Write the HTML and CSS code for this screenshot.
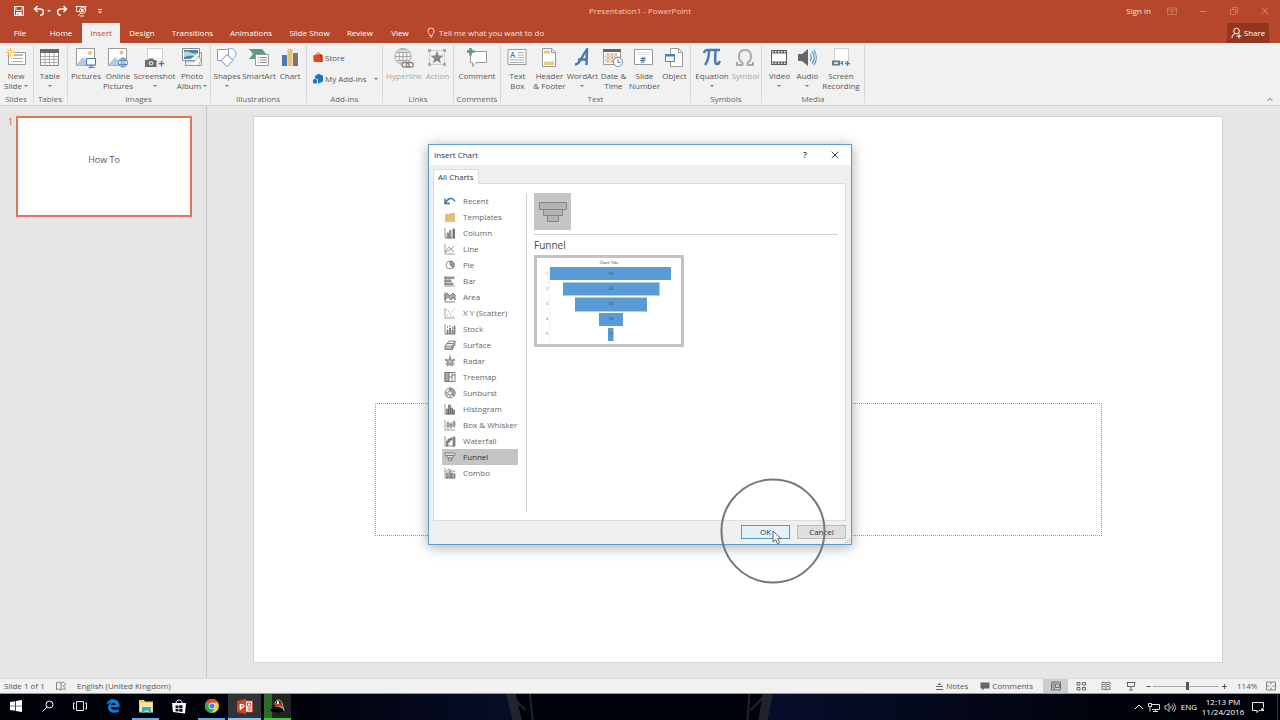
FILE: index.html
```html
<!DOCTYPE html>
<html lang="en">
<head>
<meta charset="utf-8">
<title>Presentation1 - PowerPoint</title>
<link rel="stylesheet" href="styles.css">
</head>
<body>
<div class="app">
<header class="titlebar">
  <div class="quick">
    <button class="qbtn q-save" aria-label="Save"><svg viewBox="0 0 12 12" width="12" height="12" fill="none" stroke="#fff"><path d="M1.5 1.5h9v9h-9z"/><path d="M3 1.5h6v4H3z" fill="#b7472a" stroke-width=".8"/><path d="M3.5 7.5h5v3h-5z" fill="#fff"/><path d="M5 8.5v2" stroke="#b7472a"/></svg></button>
    <button class="qbtn q-undo" aria-label="Undo"><svg viewBox="0 0 12 12" width="12" height="12" fill="none" stroke="#fff" stroke-width="1.4"><path d="M4.5 1 1.5 4l3 3M2 4h5c4.500 0 4.500 6 0 6.500"/></svg></button>
    <span class="caret caret-light"></span>
    <button class="qbtn q-redo" aria-label="Redo"><svg viewBox="0 0 12 12" width="12" height="12" fill="none" stroke="#fff" stroke-width="1.400"><path d="M7.500 1l3 3-3 3M10 4H5C.5 4 .5 10 5 10.500"/></svg></button>
    <button class="qbtn q-show" aria-label="Start from beginning"><svg viewBox="0 0 12 12" width="12" height="12" fill="none" stroke="#fff" stroke-width=".9"><path d="M.5 1.500h11M1.500 1.500v5H5M3 11l3-3M5 11h4"/><circle cx="7.500" cy="5.500" r="3"/><path d="M6.500 4v3l2.500-1.500z" fill="#fff"/><path d="M10.500 2v4"/></svg></button>
    <button class="qbtn q-more" aria-label="Customize toolbar"><svg viewBox="0 0 12 12" width="12" height="12"><path d="M4 4h4v1H4zM4 6.500h4L6 8.500z" fill="#fff"/></svg></button>
  </div>
  <div class="doc-title">Presentation1 - PowerPoint</div>
  <div class="window-tools">
    <a class="signin" href="#">Sign in</a>
    <button class="wbtn" aria-label="Ribbon display"><svg viewBox="0 0 10 10" width="10" height="10" fill="none" stroke="#d4836c" stroke-width=".8"><path d="M.5 2h9v6.500h-9zM.5 4h9M5 8V5M3.800 6 5 4.900 6.200 6"/></svg></button>
    <button class="wbtn" aria-label="Minimize"><svg viewBox="0 0 10 10" width="10" height="10" stroke="#d4836c"><path d="M1.500 5.500h7"/></svg></button>
    <button class="wbtn" aria-label="Restore"><svg viewBox="0 0 10 10" width="10" height="10" fill="none" stroke="#d4836c" stroke-width=".8"><path d="M1.500 3.500h5v5h-5zM3.500 3.500v-2h5v5h-2"/></svg></button>
    <button class="wbtn" aria-label="Close"><svg viewBox="0 0 10 10" width="10" height="10" stroke="#d4836c"><path d="M1.500 1.500l7 7M8.500 1.500l-7 7"/></svg></button>
  </div>
</header>
<nav class="tabs">
  <button class="tab t-file">File</button><button class="tab t-home">Home</button><button class="tab t-insert active">Insert</button><button class="tab t-design">Design</button><button class="tab t-trans">Transitions</button><button class="tab t-anim">Animations</button><button class="tab t-trans">Slide Show</button><button class="tab t-design">Review</button><button class="tab t-view">View</button>
  <button class="tellme"><svg viewBox="0 0 8 12" width="8" height="12" fill="none" stroke="#fbe3dc" stroke-width=".9"><path d="M2.700 8.500C2.700 7 1 6 1 4a3 3 0 0 1 6 0c0 2-1.700 3-1.700 4.500zM2.700 10h2.600"/></svg>Tell me what you want to do</button>
  <button class="share"><svg viewBox="0 0 11 12" width="11" height="12" fill="none" stroke="#fff"><circle cx="5.500" cy="4" r="2.800"/><path d="M1 11c0-2.500 1.500-4 3.500-4.500M8 6.500v5M5.500 9h5"/></svg>Share</button>
</nav>
<section class="ribbon">
  <div class="group"><div class="tools">
    <button class="tool w30"><svg viewBox="0 0 20 20" width="20" height="20" fill="none"><path d="M2.500 4.500h17v12h-17z" fill="#fff" stroke="#9a9a9a"/><path d="M8 7h9" stroke="#bbb" stroke-width="2"/><path d="M5 10.500h1M7 10.500h10M5 13.500h1M7 13.500h10" stroke="#aaa"/><path d="M4.500 0v9M0 4.500h9M1.300 1.300l6.400 6.400M7.700 1.300 1.300 7.700" stroke="#e9b963"/><circle cx="4.500" cy="4.500" r="1.800" fill="#f7e3b5"/></svg><span>New<br>Slide<i class="caret"></i></span></button>
  </div><div class="gname">Slides</div></div>
  <div class="group"><div class="tools">
    <button class="tool w30"><svg viewBox="0 0 20 20" width="20" height="20" fill="none"><path d="M.5 1.500h18v16H.5z" fill="#fff" stroke="#888"/><path d="M0 1h19v4H0z" fill="#6a6a6a"/><path d="M5 5v13M9.500 5v13M14 5v13M0 8.500h19M0 11.500h19M0 14.500h19" stroke="#999" stroke-width=".8"/></svg><span>Table</span><i class="caret"></i></button>
  </div><div class="gname">Tables</div></div>
  <div class="group"><div class="tools">
    <button class="tool w34"><svg viewBox="0 0 20 20" width="20" height="20" fill="none"><path d="M.5.5h18v17H.5z" fill="#fff" stroke="#999"/><path d="M1 16l6-7 5 5v3.500H1z" fill="#b6cbdf"/><circle cx="14" cy="5" r="2" fill="#ecc06c"/><path d="M10.500 10.500h9v6.500h-9z" fill="#fff" stroke="#4377aa"/><path d="M15 17v2M12.500 19.500h6" stroke="#4377aa"/></svg><span>Pictures</span></button>
    <button class="tool w30"><svg viewBox="0 0 20 20" width="20" height="20" fill="none"><path d="M.5.5h18v17H.5z" fill="#fff" stroke="#999"/><path d="M1 16l6-7 5 5v3.500H1z" fill="#b6cbdf"/><circle cx="13.500" cy="4.500" r="2" fill="#ecc06c"/><g fill="#fff" stroke="#4f80b0" stroke-width=".9"><circle cx="15" cy="14.500" r="4.500"/><ellipse cx="15" cy="14.500" rx="2" ry="4.500"/><path d="M11 12.500h8M11 16.500h8M15 10v9"/></g></svg><span>Online<br>Pictures</span></button>
    <button class="tool w42"><svg viewBox="0 0 20 20" width="20" height="20" fill="none"><path d="M2.500.5h15v13h-15z" fill="#fff" stroke="#aaa" stroke-dasharray="1 1"/><path d="M0 12h3l1-1.500h4L9 12h2.500v7H0z" fill="#6b6b6b"/><circle cx="6" cy="15.300" r="2.300" fill="#ddd"/><circle cx="6" cy="15.300" r="1.100" fill="#6b6b6b"/><path d="M16.500 13v5.500M13.700 15.700h5.600" stroke="#3f72a6" stroke-width="1.300"/></svg><span>Screenshot</span><i class="caret"></i></button>
    <button class="tool w32"><svg viewBox="0 0 20 20" width="20" height="20" fill="none"><path d="M3.500 4.500h16v13h-16z" fill="#eee" stroke="#999"/><path d="M.5.5h17v12H.5z" fill="#fff" stroke="#888"/><path d="M2 2h14v9H2z" fill="#4c81ad"/><path d="M2 4c5-2 8 3 14 1v3c-6 0-8-1-14 1z" fill="#b9d8d0"/><path d="M8 11l8-5v5z" fill="#fff"/><path d="M3 14h9l4-6 3 4-3 5" fill="#fff" stroke="#999" stroke-width=".7"/></svg><span>Photo<br>Album<i class="caret"></i></span></button>
  </div><div class="gname">Images</div></div>
  <div class="group"><div class="tools">
    <button class="tool w30"><svg viewBox="0 0 20 20" width="20" height="20" fill="#fff" stroke="#7d9fc1"><circle cx="13.500" cy="6" r="5.500"/><path d="M.5 1.500h11v11H.5z"/><path d="M10 6.500l6 6-6 6-6-6z" stroke="#5f8ebb"/></svg><span>Shapes</span><i class="caret"></i></button>
    <button class="tool w34"><svg viewBox="0 0 20 20" width="20" height="20"><path d="M0 1h13l4 5-4 5H0l4-5z" fill="#5b9b81"/><path d="M6.500 6.500h13v11h-13z" fill="#fff" stroke="#999"/><path d="M8.500 9.500h1M11 9.500h7M8.500 12h1M11 12h7M8.500 14.500h1M11 14.500h7" stroke="#888"/></svg><span>SmartArt</span></button>
    <button class="tool w28"><svg viewBox="0 0 20 20" width="20" height="20"><path d="M2 7h5v11H2z" fill="#4b7caf"/><path d="M7.500 1h5v17h-5z" fill="#e9c276"/><path d="M13 5h5v13h-5z" fill="#777"/></svg><span>Chart</span></button>
  </div><div class="gname">Illustrations</div></div>
  <div class="group"><div class="addins">
    <button class="addin"><svg viewBox="0 0 10 11" width="10" height="11"><path d="M0 3.500 7 2l2.500 1v7H1z" fill="#e8471a"/><path d="M3 3c.5-3 3.500-2.500 4-.5" fill="none" stroke="#e8471a"/><path d="M7 2l2.500 1v7L8 9.500z" fill="#c43413"/></svg>Store</button>
    <button class="addin"><svg viewBox="0 0 10 11" width="10" height="11"><path d="M2 3 5.500.8l4.500 2v5.500L6 10.500 5 10V6.500L2 5z" fill="#1e76bd"/><path d="M0 7l2-1.500L4 7v3l-2 .8L0 10z" fill="#1e76bd"/></svg>My Add-ins<i class="caret"></i></button>
  </div><div class="gname">Add-ins</div></div>
  <div class="group"><div class="tools">
    <button class="tool off w38"><svg viewBox="0 0 20 20" width="20" height="20" fill="none" stroke="#a5a5a5"><circle cx="9" cy="8.500" r="8"/><ellipse cx="9" cy="8.500" rx="4" ry="8"/><path d="M9 .5v16M1 8.500h16M2.500 4.500h13M2.500 12.500h13"/><rect x="8" y="14.500" width="7" height="4.500" rx="2.200" fill="#f0f0f0" stroke="#888" stroke-width="1.300"/><rect x="12.300" y="14.500" width="7" height="4.500" rx="2.200" stroke="#888" stroke-width="1.300"/></svg><span>Hyperlink</span></button>
    <button class="tool off w28"><svg viewBox="0 0 20 20" width="20" height="20"><path d="M2.500 2.500h15v14h-15z" fill="none" stroke="#aaa" stroke-dasharray="1 1"/><path d="M1 1h3v3H1zM16 1h3v3h-3zM1 15h3v3H1zM16 15h3v3h-3z" fill="#aaa"/><path d="M10 3l1.800 4.500 4.700.2-3.700 3 1.300 4.800-4.100-2.700-4.100 2.700 1.300-4.800-3.700-3 4.700-.2z" fill="#888"/></svg><span>Action</span></button>
  </div><div class="gname">Links</div></div>
  <div class="group"><div class="tools">
    <button class="tool w42"><svg viewBox="0 0 20 20" width="20" height="20"><path d="M3.500 3.500h16v11H9l-3.500 4v-4h-2z" fill="#fff" stroke="#999"/><path d="M3.500 0v7.500M0 3.500h7.500" stroke="#5b9b81" stroke-width="2.600"/></svg><span>Comment</span></button>
  </div><div class="gname">Comments</div></div>
  <div class="group"><div class="tools">
    <button class="tool w30"><svg viewBox="0 0 20 20" width="20" height="20"><path d="M1 1.500h18v15H1z" fill="#fff" stroke="#999"/><text x="3" y="10" class="svg-a">A</text><path d="M11 4.500h6M11 7h6M11 9.500h6M3 12h14M3 14.500h14" stroke="#aaa"/></svg><span>Text<br>Box</span></button>
    <button class="tool w34"><svg viewBox="0 0 20 20" width="20" height="20"><path d="M3.500.5h9l4 4v14h-13z" fill="#fff" stroke="#999"/><path d="M12.500.5v4h4" fill="none" stroke="#999"/><path d="M5 2.500h6v3H5zM5 13.500h10v3.500H5z" fill="#e9c880"/></svg><span>Header<br>&amp; Footer</span></button>
    <button class="tool w32"><svg viewBox="0 0 20 20" width="20" height="20"><path d="M3 16.500c5 0 7-9 12-15L14.500 17M6 11.500h9" fill="none" stroke="#4878ae" stroke-width="2.400"/></svg><span>WordArt</span><i class="caret"></i></button>
    <button class="tool w30"><svg viewBox="0 0 20 20" width="20" height="20" fill="none"><path d="M.5 1.500h17v15H.5z" fill="#fff" stroke="#999"/><path d="M0 1h18v3H0z" fill="#666"/><path d="M4 6.500h2M8 6.500h2M12 6.500h2M4 10h2M8 10h2M12 10h2M4 13.500h2M8 13.500h2" stroke="#dfa768" stroke-width="2"/><path d="M1 8.300h16M1 11.800h16M3 5v11M7 5v11M11 5v11" stroke="#bbb" stroke-width=".7"/><circle cx="15" cy="14" r="4.500" fill="#fff" stroke="#6794bd"/><path d="M15 11v3.500h2.500" stroke="#4a7cac"/></svg><span>Date &amp;<br>Time</span></button>
    <button class="tool w32"><svg viewBox="0 0 20 20" width="20" height="20"><path d="M.5 1.500h18v15H.5z" fill="#fff" stroke="#999"/><path d="M4 4.500h12M4 6.500h12" stroke="#ddd"/><text x="6" y="15" class="svg-hash">#</text></svg><span>Slide<br>Number</span></button>
    <button class="tool w28"><svg viewBox="0 0 20 20" width="20" height="20"><path d="M6.500.5h8l4 4v14h-12z" fill="#fff" stroke="#999"/><path d="M14.500.5v4h4" fill="none" stroke="#999"/><path d="M1.500 6.500h9v7h-9z" fill="#fff" stroke="#4b7eb1"/><path d="M1 6h10v2.500H1z" fill="#4b7eb1"/></svg><span>Object</span></button>
  </div><div class="gname">Text</div></div>
  <div class="group"><div class="tools">
    <button class="tool w38"><svg viewBox="0 0 20 20" width="20" height="20"><path d="M2 5c.5-3 2-3 4-3h12M7 3c0 6-1 10-4 14M13.500 3c-.5 8-1 13 1.500 13 1.500 0 2.500-1 2.500-3" fill="none" stroke="#4a7cb0" stroke-width="2.500"/></svg><span>Equation</span><i class="caret"></i></button>
    <button class="tool off w28"><svg viewBox="0 0 20 20" width="20" height="20"><path d="M2 14v3h5.500v-2C2 11 3 2 10 2s8 9 2.500 13v2H18v-3" fill="none" stroke="#aaa" stroke-width="2"/></svg><span>Symbol</span></button>
  </div><div class="gname">Symbols</div></div>
  <div class="group"><div class="tools">
    <button class="tool w32"><svg viewBox="0 0 20 20" width="20" height="20"><path d="M2 2h16v15H2z" fill="#5d5d5d"/><path d="M3 5.500h14v8H3z" fill="#fff"/><path d="M3 3.700h14M3 15.300h14" stroke="#eee" stroke-width="1.500" stroke-dasharray="1.500 1.500"/></svg><span>Video</span><i class="caret"></i></button>
    <button class="tool w24"><svg viewBox="0 0 20 20" width="20" height="20"><path d="M1 6h4l6-5v17l-6-5H1z" fill="#666"/><path d="M13 6c1.500 2 1.500 5 0 7M15 3.500c3 3.500 3 8.500 0 12M17 2c3 4.500 3 10.500 0 15" fill="none" stroke="#5b8fbd" stroke-width="1.200"/></svg><span>Audio</span><i class="caret"></i></button>
    <button class="tool w42"><svg viewBox="0 0 20 20" width="20" height="20"><path d="M3.500.5h14v13h-14z" fill="#fff" stroke="#aaa" stroke-dasharray="1 1"/><path d="M1 12.500h8v5H1z" fill="#6d7780"/><path d="M3 14h4v2H3z" fill="#cde"/><path d="M9 15l3-2v4.500z" fill="#4b7eb1"/><path d="M16.500 13v5M14 15.500h5" stroke="#4b7eb1" stroke-width="1.300"/></svg><span>Screen<br>Recording</span></button>
  </div><div class="gname">Media</div></div>
  <button class="collapse" aria-label="Collapse ribbon"><svg viewBox="0 0 6 5" width="6" height="5" fill="none" stroke="#666"><path d="M.5 4 3 1.500 5.500 4"/></svg></button>
</section>
<main class="workspace">
  <aside class="slides"><span class="slide-no">1</span><button class="thumb">How To</button></aside>
  <section class="canvas"><div class="slide"><div class="placeholder"></div></div></section>
</main>
<footer class="status">
  <span class="s-slide">Slide 1 of 1</span>
  <button class="icon-btn s-spell" aria-label="Spelling"><svg viewBox="0 0 10 10" width="10" height="10" fill="none" stroke="#777" stroke-width=".9"><path d="M5 2v7M5 2C3.500 1 2 1 .500 1.500V8.500c1.500-.5 3-.5 4.500.5 1-1 2-1 4-.7V6M5 2c1-.8 2-1 3.500-.8M6.500 4l1.200 1.500L9.800 2"/></svg></button>
  <span>English (United Kingdom)</span>
  <div class="status-right">
    <button class="s-btn s-notes"><svg viewBox="0 0 9 9" width="9" height="9" stroke="#666"><path d="M1 4.500h7M1 7.500h7"/><path d="M2.500 3 4.500 1l2 2z" fill="#666" stroke="none"/></svg>Notes</button>
    <button class="s-btn s-comments"><svg viewBox="0 0 10 9" width="10" height="9"><path d="M.5.500h9v6h-5l-2 2v-2h-2z" fill="#666"/></svg>Comments</button>
    <button class="view on" aria-label="Normal"><svg viewBox="0 0 10 10" width="10" height="10" fill="none" stroke="#666" stroke-width=".9"><path d="M.5 1h9v8h-9zM3 1v8M4.500 3h4v3.500h-4zM1 3.500h1M1 6h1"/></svg></button>
    <button class="view" aria-label="Slide sorter"><svg viewBox="0 0 10 10" width="10" height="10" fill="none" stroke="#666"><path d="M1 1.500h3v2.500H1zM6.500 1.500h3v2.500h-3zM1 6.500h3V9H1zM6.500 6.500h3V9h-3z"/></svg></button>
    <button class="view" aria-label="Reading view"><svg viewBox="0 0 10 10" width="10" height="10" fill="none" stroke="#666" stroke-width=".9"><path d="M5 2v7M5 2C3.500 1 2 1 1 1.500v7c1.500-.5 2.500-.5 4 .5 1.500-1 2.500-1 4-.5v-7C8 1 6.500 1 5 2M2 3.500h2M2 5.500h2M6 3.500h2M6 5.500h2"/></svg></button>
    <button class="view" aria-label="Slide show"><svg viewBox="0 0 10 10" width="10" height="10" fill="none" stroke="#666"><path d="M.5 1.500h9M1.500 1.500v4h7v-4M5 5.500v3M3 9h4"/></svg></button>
    <button class="zoom-step" aria-label="Zoom out"><svg viewBox="0 0 7 7" width="7" height="7" stroke="#555"><path d="M1.500 3.500h4"/></svg></button>
    <input class="zoom" type="range" min="0" max="100" value="53" aria-label="Zoom">
    <button class="zoom-step" aria-label="Zoom in"><svg viewBox="0 0 7 7" width="7" height="7" stroke="#555"><path d="M1 3.500h5M3.500 1v5"/></svg></button>
    <span class="percent">114%</span>
    <button class="icon-btn" aria-label="Fit slide"><svg viewBox="0 0 10 10" width="10" height="10" fill="none" stroke="#777" stroke-width=".9"><path d="M.5 1h9v8h-9zM5 1v2.500M5 6.500V9M1 5h2.500M6.500 5H9"/></svg></button>
  </div>
</footer>
<nav class="taskbar">
  <button class="task narrow" aria-label="Start"><svg viewBox="0 0 12 12" width="12" height="12" fill="#fff"><path d="M0 2l5-.8v4.500H0zM5.700 1 12 0v5.700H5.700zM0 6.300h5v4.500L0 10zM5.700 6.300H12V12l-6.300-1z"/></svg></button>
  <button class="task narrow" aria-label="Search"><svg viewBox="0 0 12 12" width="12" height="12" fill="none" stroke="#fff"><circle cx="7.500" cy="4.500" r="3.500"/><path d="M5 7l-4.500 4.500"/></svg></button>
  <button class="task narrow" aria-label="Task view"><svg viewBox="0 0 14 12" width="14" height="12" fill="none" stroke="#fff" stroke-width=".9"><path d="M3.500 1.500h7v9h-7zM2 3H.5v6H2M12 3h1.500v6H12"/></svg></button>
  <button class="task" aria-label="Edge"><svg viewBox="0 0 14 14" width="14" height="14"><path d="M.5 6C1.500-2 13.500-1.500 13.500 6.500V8.300H5c.5 3 5 3.500 7.800 1.700v2.700C8 15 2 13.500 2 8.500 2 6 3.500 4.500 5 3.800 3 4 1.300 5 .5 6zM5 6h4.500C9.500 3 5.300 3 5 6z" fill="#0f7bd7"/></svg></button>
  <button class="task open" aria-label="File Explorer"><svg viewBox="0 0 14 13" width="14" height="13"><path d="M0 0h5l1 1.500h8v11H0z" fill="#f2cf72"/><path d="M1 3h12v8H1z" fill="#fbe7a3"/><path d="M3 7h9v6H9.500v-2.500h-4V13H3z" fill="#3fa9cb"/></svg></button>
  <button class="task" aria-label="Store"><svg viewBox="0 0 14 15" width="14" height="15"><path d="M0 4h14l-1 10.500L1 13z" fill="#fff"/><path d="M4 4c0-4 6-4 6 0" fill="none" stroke="#fff"/><path d="M3.500 6.500h3v2.800h-3zM7.200 6.300h3.300v3H7.200zM3.500 10h3v2.500l-3-.3zM7.200 10h3.300v3l-3.300-.4z" fill="#111"/></svg></button>
  <button class="task open" aria-label="Chrome"><svg viewBox="0 0 14 14" width="14" height="14"><circle cx="7" cy="7" r="7" fill="#f7ca28"/><path d="M7 7 1 3.300A7 7 0 0 1 13 3.500H7z" fill="#df4b37"/><path d="M1 3.300A7 7 0 0 0 6.500 14L9.500 9 7 7z" fill="#35a357"/><circle cx="7" cy="7" r="3.300" fill="#fff"/><circle cx="7" cy="7" r="2.600" fill="#3d82ee"/></svg></button>
  <button class="task open current" aria-label="PowerPoint"><svg viewBox="0 0 16 15" width="16" height="15"><path d="M8 2h7.500v11H8z" fill="#fff" stroke="#d24625" stroke-width=".8"/><path d="M0 2l9-2v15l-9-2z" fill="#d24625"/><text x="2" y="10.500" class="svg-p">P</text><path d="M10.500 4h3v3h-3zM10.500 9h4M10.500 11h4" stroke="#d24625" fill="none"/></svg></button>
  <button class="task recorder" aria-label="Recorder"><svg viewBox="0 0 16 16" width="16" height="16"><path d="M3 14V6l2-4h6l3 8v4z" fill="#151713"/><path d="M4 6h7M5 8h7" stroke="#e3503b" stroke-width="1.500"/><path d="M5 5c1-4 6-4 7 0l2 8M9 8l5 3" fill="none" stroke="#ddc37d"/><path d="M7 3h2v3H7z" fill="#e9e8d2"/><path d="M1 13c3-3 6 2 12-1" stroke="#000" stroke-width="3" fill="none"/></svg></button>
  <svg class="wallpaper" viewBox="0 0 836 26" preserveAspectRatio="none" aria-hidden="true">
    <defs>
      <linearGradient id="glow-left"><stop offset="0" stop-color="#000209"/><stop offset="1" stop-color="#080d28"/></linearGradient>
      <linearGradient id="glow-right"><stop offset="0" stop-color="#080e2b"/><stop offset="1" stop-color="#000209"/></linearGradient>
    </defs>
    <path d="M0 0h216l10 26H0z" fill="url(#glow-left)"/><path d="M478 0h358v26H472z" fill="url(#glow-right)"/>
    <path d="M214 0h10l6 26h-9zM470 0h10l-5 26h-9z" fill="#20252b"/>
    <path d="M220 3l14 13M238 0l3 26M471 3l-13 13M457 0l-2 26" fill="none" stroke="#22252e" stroke-width="2"/>
  </svg>
  <div class="tray">
    <button class="tray-btn" aria-label="Show hidden icons"><svg viewBox="0 0 10 8" width="10" height="8" fill="none" stroke="#fff"><path d="M1 6l4-4 4 4"/></svg></button>
    <button class="tray-btn" aria-label="Network"><svg viewBox="0 0 12 11" width="12" height="11" fill="none" stroke="#ddd"><path d="M4 2.500h7.500v5H4M7.500 7.500v2M5 9.500h5M.5 1.500h3v3h-3zM2 4.500v5"/></svg></button>
    <button class="tray-btn" aria-label="Volume"><svg viewBox="0 0 12 11" width="12" height="11" fill="none" stroke="#ddd" stroke-width=".9"><path d="M1 4h1.500L5 1.500v8L2.500 7H1zM6.500 4c.7 1 .7 2 0 3M8 2.500c1.700 2 1.700 4 0 6M9.700 1.200c2.200 3 2.200 6 0 8.800"/></svg></button>
    <span class="lang">ENG</span>
    <time class="clock">12:13 PM<br>11/24/2016</time>
    <button class="tray-btn notify" aria-label="Notifications"><svg viewBox="0 0 12 12" width="12" height="12" fill="none" stroke="#eee"><path d="M8.500 9.500H7l-2 2v-2H.5v-8h11v5"/><path d="M8.500 10c1-1 .5-3 2-3s1 2 1.500 3z" fill="#eee" stroke="none"/></svg></button>
  </div>
</nav>

<section class="dialog" role="dialog" aria-label="Insert Chart">
  <header class="d-title"><span>Insert Chart</span><button class="d-help" aria-label="Help">?</button><button class="d-close" aria-label="Close"><svg viewBox="0 0 8 8" width="8" height="8" stroke="#333" stroke-width=".9"><path d="M.7.700l6.600 6.600M7.300.700.700 7.300"/></svg></button></header>
  <div class="d-body">
    <button class="d-tab">All Charts</button>
    <div class="d-panel">
      <div class="types">
        <button class="type"><svg viewBox="0 0 12 12" width="12" height="12" fill="none" stroke="#3b6fa5" stroke-width="1.400"><path d="M1 3.500v5h5M1.500 8C4 3 8 1.500 11 6.500"/></svg>Recent</button>
        <button class="type"><svg viewBox="0 0 12 12" width="12" height="12"><path d="M1 3h5l1-1h4v9H1z" fill="#e9bd75"/></svg>Templates</button>
        <button class="type"><svg viewBox="0 0 12 12" width="12" height="12" fill="#bbb" stroke="#666" stroke-width=".7"><path d="M1 1v10h10" fill="none"/><path d="M3 6h1.500v5H3zM5.500 3.500H7V11H5.500z"/><path d="M9 2h1.500v9H9z" fill="#666"/></svg>Column</button>
        <button class="type"><svg viewBox="0 0 12 12" width="12" height="12" fill="none" stroke="#777" stroke-width=".7"><path d="M1 1v10h10M1 9l4-5 5 5M2 9l5-3 3-3"/></svg>Line</button>
        <button class="type"><svg viewBox="0 0 12 12" width="12" height="12" fill="#fff" stroke="#777" stroke-width=".8"><circle cx="6" cy="6" r="4"/><path d="M6 2v4l3 3a4 4 0 0 0-3-7z" fill="#999"/></svg>Pie</button>
        <button class="type"><svg viewBox="0 0 12 12" width="12" height="12" fill="#bbb" stroke="#666" stroke-width=".7"><path d="M1 1v10h10" fill="none"/><path d="M1 2h9v1.500H1zM1 5h6v1.500H1zM1 8h8v1.500H1z"/></svg>Bar</button>
        <button class="type"><svg viewBox="0 0 12 12" width="12" height="12" fill="#aaa" stroke="#666" stroke-width=".8"><path d="M1 1v10h10" fill="none"/><path d="M1 4l2-2 3 3 3-3 2 2v5L9 6 7 9 4 6 1 9z"/></svg>Area</button>
        <button class="type"><svg viewBox="0 0 12 12" width="12" height="12" fill="none" stroke="#888" stroke-width=".8"><path d="M1 1v10h10"/><path d="M3 8h1M5 6h1M4 4h1M7 7h1M8 4h1M10 2h1M9 9h1M6 9h1M2 3h1"/></svg>X Y (Scatter)</button>
        <button class="type"><svg viewBox="0 0 12 12" width="12" height="12" fill="#bbb" stroke="#666" stroke-width=".7"><path d="M1 1v10h10" fill="none"/><path d="M3 7h1v4H3zM5.500 5h1v6h-1zM8 7h1v4H8zM10 3h1v8h-1zM3.500 3v2M6 2v2M8.500 4v2"/></svg>Stock</button>
        <button class="type"><svg viewBox="0 0 12 12" width="12" height="12" fill="#eee" stroke="#666" stroke-width=".8"><path d="M1 10.500V7l4-5h6v3l-3 5.500zM1 7h7l3-5M1 9h7l3-4M8 7v3.500M3 4.500h6"/></svg>Surface</button>
        <button class="type"><svg viewBox="0 0 12 12" width="12" height="12" fill="#ddd" stroke="#777" stroke-width=".8"><path d="M6 0v11M1 4l10 5M11 4L1 9" fill="none"/><path d="M6 2l1 3 4 0-3 2 1 4-3-2-3 2 1-4-3-2 4 0z" fill="#bbb"/></svg>Radar</button>
        <button class="type"><svg viewBox="0 0 12 12" width="12" height="12" fill="#fff" stroke="#666" stroke-width=".8"><path d="M1 1.500h10v9H1z"/><path d="M1 1.500h4v9H1z" fill="#aaa"/><path d="M8 1.500v9M5 6h3M8 4h3"/></svg>Treemap</button>
        <button class="type"><svg viewBox="0 0 12 12" width="12" height="12" fill="#eee" stroke="#777" stroke-width=".8"><circle cx="6" cy="6" r="5"/><path d="M6 1v5l4 3A5 5 0 0 0 6 1z" fill="#aaa"/><circle cx="6" cy="6" r="2.200"/><path d="M6 1v3M1 6h3M2 9l2-1M8 7l2 2M6 8v3"/></svg>Sunburst</button>
        <button class="type"><svg viewBox="0 0 12 12" width="12" height="12" fill="#999" stroke="#666" stroke-width=".7"><path d="M1 1v10h10" fill="none"/><path d="M2.500 6h2v5h-2zM4.500 2h2v9h-2zM6.500 5h2v6h-2zM8.500 7h2v4h-2z"/></svg>Histogram</button>
        <button class="type"><svg viewBox="0 0 12 12" width="12" height="12" fill="#bbb" stroke="#777" stroke-width=".7"><path d="M1 1v10h10M4 2v8M7 3v7M10 1v8" fill="none"/><path d="M3 4h2v4H3zM6 5h2v3H6zM9 3h2v4H9z"/></svg>Box &amp; Whisker</button>
        <button class="type"><svg viewBox="0 0 12 12" width="12" height="12" fill="#999" stroke="#666" stroke-width=".7"><path d="M1 1v10h10" fill="none"/><path d="M2.500 6H4v5H2.500zM4 4h2v3H4zM6.500 3h1.500v2H6.500zM9 2h2v9H9z"/></svg>Waterfall</button>
        <button class="type selected"><svg viewBox="0 0 12 12" width="12" height="12" fill="#ddd" stroke="#777" stroke-width=".8"><path d="M1 2h10v2.500H1zM3 4.500h6V7H3zM4.500 7h3v2.500h-3z"/></svg>Funnel</button>
        <button class="type"><svg viewBox="0 0 12 12" width="12" height="12" fill="#bbb" stroke="#666" stroke-width=".7"><path d="M1 1v10h10M2 5l3-3 3 2 3 1" fill="none"/><path d="M2.500 6H4v5H2.500zM5 4h1.500v7H5zM7.500 6H9v5H7.500zM10 7h1v4h-1z"/></svg>Combo</button>
      </div>
      <div class="detail">
        <button class="subtype" aria-label="Funnel"><svg viewBox="0 0 30 24" width="30" height="24" fill="#b3b3b3" stroke="#858585"><path d="M1.500 2.500h27v7h-27zM5.500 9.500h19v6h-19zM9.500 15.500h11v6h-11z"/></svg></button>
        <h2>Funnel</h2>
        <button class="preview"><svg viewBox="0 0 144 86" width="144" height="86"><text x="72" y="6" class="c-title">Chart Title</text><path d="M13 9h121v13H13zM26 24.500h96.500v13H26zM38 39.500h72v14H38zM62 55h24v13H62zM71 70h5.500v13H71z" fill="#5b9bd5"/><path d="M12.500 8v76" stroke="#e3e3e3" stroke-width=".5"/><g class="c-num"><text x="10" y="17">1</text><text x="10" y="32">2</text><text x="10" y="47">3</text><text x="10" y="62">4</text><text x="10" y="77">5</text><text x="74" y="17">500</text><text x="74" y="32">400</text><text x="74" y="47">300</text><text x="74" y="62">100</text><text x="74" y="77">25</text></g></svg></button>
      </div>
    </div>
    <div class="d-actions"><button class="d-btn primary">OK</button><button class="d-btn">Cancel</button></div>
  </div>
  <svg class="grip" viewBox="0 0 6 6" width="6" height="6" fill="#bbb"><path d="M4 0h1v1H4zM2 2h1v1H2zM4 2h1v1H4zM0 4h1v1H0zM2 4h1v1H2zM4 4h1v1H4z"/></svg>
  <svg class="pointer" viewBox="0 0 106 106" width="106" height="106"><circle cx="53" cy="53" r="51.500" fill="none" stroke="#777" stroke-width="2"/><path d="M53 53v11l2.600-2.400 1.900 4 2-.9-1.900-4H61z" fill="#fff" stroke="#555" stroke-width=".9"/></svg>
</section>
</div>
</body>
</html>
```
FILE: styles.css
```css
* { box-sizing: border-box; }
body { margin: 0; font-family: "Open Sans", "Noto Sans", sans-serif; font-size: 8px; line-height: 10px; color: #555; background: #e6e6e6; }
button { font: inherit; color: inherit; background: none; border: 0; padding: 0; margin: 0; white-space: nowrap; }
svg { flex: none; display: block; }
.app { position: relative; display: flex; flex-direction: column; height: 100vh; min-height: 600px; overflow: hidden; }

.titlebar { display: grid; grid-template-columns: 1fr auto 1fr; align-items: center; height: 23px; padding-bottom: 2px; background: #b7472a; color: #f3cabd; }
.quick { display: flex; align-items: center; padding-left: 13px; }
.q-undo { margin-left: 8px; }
.q-redo { margin-left: 5px; }
.q-show, .q-more { margin-left: 7px; }
.window-tools { display: flex; justify-content: flex-end; align-items: center; }
.signin { color: #fbe3dc; text-decoration: none; margin-right: 5px; }
.wbtn { display: flex; justify-content: center; width: 31px; }

.caret { display: inline-block; width: 0; height: 0; margin-left: 2px; border: 2px solid transparent; border-top-color: #777; border-bottom: 0; vertical-align: 2px; }
.caret-light { border-top-color: #fff; margin-left: 2px; }

.tabs { display: flex; height: 20px; background: #b7472a; color: #fff; }
.tab.active { background: #f1f1f1; color: #b7472a; }
.t-file { width: 40px; }
.t-home { width: 42px; }
.t-insert { width: 38px; }
.t-design { width: 44px; }
.t-trans { width: 57px; }
.t-anim { width: 60px; }
.t-view { width: 36px; }
.tellme { display: flex; align-items: center; gap: 4px; margin-left: 9px; color: #fbe3dc; }
.share { display: flex; align-items: center; justify-content: center; gap: 2px; width: 42px; margin: 0 11px 0 auto; background: #923620; }

.ribbon { display: flex; height: 63px; padding-top: 2px; background: #f1f1f1; border-bottom: 1px solid #d2d2d2; }
.group { display: flex; flex-direction: column; justify-content: space-between; padding: 3px 2px 0 1px; margin-bottom: 2px; border-right: 1px solid #d8d8d8; }
.tools { display: flex; }
.tool { display: flex; flex-direction: column; align-items: center; text-align: center; }
.tool > svg { margin-bottom: 3px; }
.tool > .caret { margin: 4px 0 0; }
.off { color: #a5a5a5; }
.w24 { width: 24px; }
.w28 { width: 28px; }
.w30 { width: 30px; }
.w32 { width: 32px; }
.w34 { width: 34px; }
.w38 { width: 39px; }
.w42 { width: 43px; }
.gname { text-align: center; line-height: 8px; color: #666; }
.addins { display: flex; flex-direction: column; gap: 10px; padding: 4px 2px 0 5px; }
.addin { display: flex; align-items: center; gap: 2px; height: 11px; }
.addin .caret { margin-left: 6px; }
.collapse { align-self: flex-end; margin: 0 7px 3px auto; }

.workspace { display: flex; flex: 1; min-height: 0; }
.slides { display: flex; align-items: flex-start; width: 207px; padding: 10px 14px 0 8px; border-right: 1px solid #c8c8c8; }
.slide-no { width: 8px; padding-top: 1px; color: #d2583a; font-size: 9px; }
.thumb { flex: 1; aspect-ratio: 176 / 101; padding-bottom: 14px; background: #fff; border: 2px solid #e0745a; font-size: 9px; }
.canvas { flex: 1; padding: 10px 57px 15px 46px; }
.slide { position: relative; height: 100%; background: #fff; border: 1px solid #d3d3d3; }
.placeholder { position: absolute; left: 12.5%; right: 12.4%; top: 52.4%; bottom: 23.2%; border: 1px dotted #999; }

.status { display: flex; align-items: center; height: 16px; padding: 0 4px; background: #f1f1f1; border-top: 1px solid #ddd; border-bottom: 1px solid #999; }
.s-slide { width: 52px; }
.s-spell { margin-right: 11px; }
.status-right { display: flex; align-items: center; height: 100%; margin-left: auto; }
.s-btn { display: flex; align-items: center; gap: 2px; }
.s-notes { margin-right: 12px; }
.s-comments { margin-right: 10px; }
.view { display: flex; justify-content: center; align-items: center; width: 25px; height: 100%; }
.view.on { background: #cdcdcd; }
.zoom-step { margin: 0 1px 0 2px; }
.zoom { appearance: none; width: 66px; height: 9px; margin: 0; background: linear-gradient(#aaa, #aaa) center / 100% 1px no-repeat; }
.zoom::-webkit-slider-thumb { appearance: none; width: 3px; height: 8px; background: #555; }
.percent { width: 28px; padding-left: 8px; margin-right: 9px; }

.taskbar { display: flex; height: 26px; background: #000209; color: #fff; }
.task { display: flex; align-items: center; justify-content: center; width: 33px; padding-bottom: 2px; }
.narrow { width: 32px; }
.open { background: linear-gradient(#6ba9e6, #6ba9e6) bottom / 27px 2px no-repeat; }
.open.current { background: linear-gradient(#8bc0f2, #8bc0f2) bottom / 100% 2px no-repeat, #323338; }
.recorder { width: 27px; margin-left: 3px; background: linear-gradient(#35cf35, #35cf35) bottom / 100% 2px no-repeat, linear-gradient(90deg, #2f6a2d 30%, #222 30%); }
.wallpaper { flex: 1; min-width: 0; height: 26px; }
.tray { display: flex; align-items: center; padding-right: 13px; border-right: 1px solid #333; margin-right: 2px; }
.tray-btn { margin-left: 4px; }
.lang { margin-left: 5px; }
.clock { width: 44px; margin-left: 4px; text-align: center; }
.notify { margin-left: 7px; }

.dialog { position: absolute; top: 144px; left: 0; right: 0; width: 424px; margin: 0 auto; border: 1px solid #5e9cce; background: #f0f0f0; box-shadow: 0 2px 12px rgba(0, 0, 0, .35); color: #333; }
.d-title { display: flex; align-items: center; height: 20px; padding: 0 12px 0 5px; background: #fff; }
.d-help { margin-left: auto; margin-right: 24px; font-weight: 600; }
.d-body { padding: 4px 5px 5px 4px; }
.d-tab { position: relative; display: block; height: 15px; padding: 0 4px; background: #fff; border: 1px solid #dcdcdc; border-bottom: 0; }
.d-panel { display: flex; margin-top: -1px; padding: 9px 7px 8px 8px; background: #fff; border: 1px solid #dcdcdc; }
.types { display: flex; flex-direction: column; width: 85px; padding: 0 8px 31px 0; border-right: 1px solid #d0d0d0; }
.type { display: flex; align-items: center; gap: 7px; height: 16px; padding-left: 2px; text-align: left; color: #666; }
.type.selected { background: #c4c4c4; color: #333; }
.detail { flex: 1; padding-left: 7px; }
.subtype { display: flex; align-items: center; justify-content: center; width: 37px; height: 37px; background: #c5c5c5; }
.detail h2 { margin: 4px 0 3px; padding-top: 3px; border-top: 1px solid #d0d0d0; font-size: 10px; line-height: 14px; font-weight: 400; color: #444; }
.preview { display: block; border: 3px solid #c3c3c3; background: #fff; }
.d-actions { display: flex; justify-content: flex-end; gap: 7px; padding-top: 4px; }
.d-btn { width: 49px; height: 14px; border: 1px solid #bbb; background: #dedede; }
.d-btn.primary { border-color: #4a9cd0; background: #e4f1fb; }
.grip { position: absolute; right: 0; bottom: 0; }
.pointer { position: absolute; left: 291px; top: 333px; pointer-events: none; }

.svg-a { font-size: 8px; fill: #3f72a6; font-weight: 600; }
.svg-hash { font-size: 9px; font-weight: 700; fill: #4b7eb1; }
.svg-p { font-size: 9px; font-weight: 700; fill: #fff; }
.c-title { font-size: 4px; text-anchor: middle; fill: #222; }
.c-num { font-size: 3px; text-anchor: middle; fill: #444; }
```
